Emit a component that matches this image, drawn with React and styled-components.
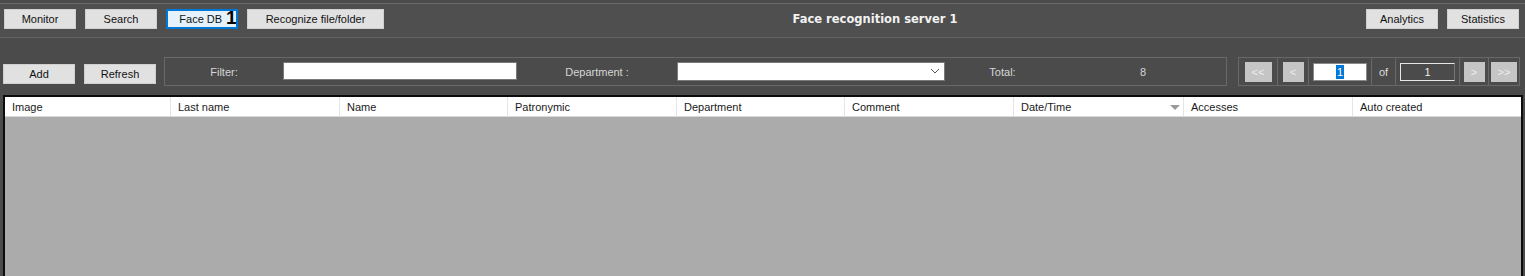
import React from 'react'
import styled, { createGlobalStyle } from 'styled-components'

const GlobalStyle = createGlobalStyle`
    html, body {
        margin: 0;
        padding: 0;
        background-color: #4b4b4b;
    }
    * { box-sizing: border-box; }
`

const Page = styled.div`
    width: 1525px;
    height: 276px;
    overflow: hidden;
    background-color: #4b4b4b;
    font-family: "Liberation Sans", Arial, sans-serif;
    font-size: 11px;
    padding-top: 3px;
`

const Toolbar = styled.div`
    display: flex;
    align-items: center;
    height: 35px;
    padding: 0 6px 3px 4px;
    background-color: #4f4f4f;
    border-top: 1px solid #6c6c6c;
    border-bottom: 1px solid #636363;
`

const ButtonGroup = styled.div`
    display: flex;
    gap: ${props => props.gap || 9}px;
`

const Button = styled.button`
    width: ${props => props.w || 72}px;
    height: 20px;
    padding: 0 0 0 ${props => props.focused ? 12 : 0}px;
    background-color: ${props => props.focused ? '#e5f1fb' : '#e1e1e1'};
    border: 1px solid ${props => props.focused ? '#0078d7' : '#d0d0d0'};
    box-shadow: ${props => props.focused ? 'inset 0 0 0 1px #0078d7' : 'none'};
    color: #111;
    font-family: "Liberation Sans", Arial, sans-serif;
    font-size: 11px;
    line-height: 18px;
    white-space: nowrap;
    cursor: pointer;
`

const Marker = styled.span`
    display: inline-block;
    margin-left: 4px;
    line-height: 0;
    vertical-align: -1px;
    font-family: "Liberation Sans", Arial, sans-serif;
    font-weight: 700;
    font-size: 19px;
    color: #000;
`

const Title = styled.div`
    flex: 1;
    text-align: center;
    color: #f2f2f2;
    font-family: "DejaVu Sans", Verdana, sans-serif;
    font-weight: 700;
    font-size: 11.5px;
`

const FilterRow = styled.div`
    display: flex;
    align-items: flex-start;
    margin-top: 19px;
    padding: 0 5px 0 3px;
    height: 38px;
`

const SideButtons = styled(ButtonGroup)`
    margin-top: 7px;
    margin-right: 8px;
`

const Panel = styled.div`
    display: flex;
    align-items: center;
    height: 29px;
    border: 1px solid #686868;
`

const FilterPanel = styled(Panel)`
    width: 1063px;
    margin-right: 11px;
`

const Label = styled.div`
    width: ${props => props.w}px;
    text-align: center;
    color: #d6d6d6;
    font-size: 11px;
`

const TextBox = styled.input`
    width: ${props => props.w}px;
    height: 18px;
    margin-top: -1px;
    border: 1px solid #7a7a7a;
    background-color: #fff;
    outline: 0;
    padding: 0 3px;
    font-family: "Liberation Sans", Arial, sans-serif;
    font-size: 11px;
`

const SelectBox = styled.div`
    display: flex;
    align-items: center;
    justify-content: flex-end;
    width: ${props => props.w}px;
    height: 19px;
    margin-top: -1px;
    background-color: #fff;
    border: 1px solid #7a7a7a;
    padding-right: 4px;
`

const Pager = styled(Panel)`
    width: 282px;
`

const PagerCell = styled.div`
    display: flex;
    align-items: center;
    justify-content: center;
    width: ${props => props.w}px;
    height: 100%;
    border-right: ${props => props.last ? 'none' : '1px solid #686868'};
    color: #dcdcdc;
    font-size: 11px;
`

const PagerButton = styled.div`
    display: flex;
    align-items: center;
    justify-content: center;
    width: ${props => props.w}px;
    height: 20px;
    background-color: #c5c5c5;
    color: #eeeeee;
    font-size: 11px;
`

const PageInput = styled.div`
    display: flex;
    align-items: center;
    justify-content: center;
    width: 54px;
    height: 18px;
    background-color: #fff;
    border: 1px solid #8a8a8a;
`

const Selected = styled.span`
    background-color: #0078d7;
    color: #fff;
    padding: 0 1px;
    line-height: 14px;
`

const PageCount = styled.div`
    display: flex;
    align-items: center;
    justify-content: center;
    width: 55px;
    height: 18px;
    border: 1px solid #e6e6e6;
    border-right-color: #777;
    color: #f0f0f0;
`

const Table = styled.div`
    margin: 0 2px 0 3px;
    border: 2px solid #0c0c0c;
    border-bottom: none;
    height: 200px;
    background-color: #ababab;
`

const HeaderRow = styled.div`
    display: flex;
    height: 20px;
    background-color: #fff;
    border-bottom: 1px solid #d8d8d8;
`

const HeaderCell = styled.div`
    position: relative;
    display: flex;
    align-items: center;
    width: ${props => props.w}px;
    padding-left: 7px;
    border-right: 1px solid #e5e5e5;
    color: #1a1a1a;
    font-size: 11px;
    &:last-child { border-right: none; flex: 1; }
`

const SortArrow = styled.span`
    position: absolute;
    right: 3px;
    top: 8px;
    width: 0;
    height: 0;
    border-left: 5px solid transparent;
    border-right: 5px solid transparent;
    border-top: 5px solid #9a9a9a;
`

const columns = [
    { title: 'Image', w: 166 },
    { title: 'Last name', w: 169 },
    { title: 'Name', w: 168 },
    { title: 'Patronymic', w: 169 },
    { title: 'Department', w: 168 },
    { title: 'Comment', w: 169 },
    { title: 'Date/Time', w: 170, sorted: true },
    { title: 'Accesses', w: 169 },
    { title: 'Auto created', w: 168 },
]

const App = () => {
    return (
        <Page>
            <GlobalStyle />
            <Toolbar>
                <ButtonGroup>
                    <Button>Monitor</Button>
                    <Button>Search</Button>
                    <Button focused>Face DB<Marker>1</Marker></Button>
                    <Button w={137}>Recognize file/folder</Button>
                </ButtonGroup>
                <Title>Face recognition server 1</Title>
                <ButtonGroup>
                    <Button>Analytics</Button>
                    <Button>Statistics</Button>
                </ButtonGroup>
            </Toolbar>

            <FilterRow>
                <SideButtons>
                    <Button>Add</Button>
                    <Button>Refresh</Button>
                </SideButtons>

                <FilterPanel>
                    <Label w={118}>Filter:</Label>
                    <TextBox w={234} />
                    <Label w={160}>Department :</Label>
                    <SelectBox w={268}>
                        <svg width="10" height="6" viewBox="0 0 10 6">
                            <path d="M1 1 L5 5 L9 1" fill="none" stroke="#555" strokeWidth="1" />
                        </svg>
                    </SelectBox>
                    <Label w={115}>Total:</Label>
                    <Label w={166}>8</Label>
                </FilterPanel>

                <Pager>
                    <PagerCell w={39}><PagerButton w={27}>&lt;&lt;</PagerButton></PagerCell>
                    <PagerCell w={31}><PagerButton w={21}>&lt;</PagerButton></PagerCell>
                    <PagerCell w={63}><PageInput><Selected>1</Selected></PageInput></PagerCell>
                    <PagerCell w={24}>of</PagerCell>
                    <PagerCell w={64}><PageCount>1</PageCount></PagerCell>
                    <PagerCell w={29}><PagerButton w={21}>&gt;</PagerButton></PagerCell>
                    <PagerCell w={30} last><PagerButton w={26}>&gt;&gt;</PagerButton></PagerCell>
                </Pager>
            </FilterRow>

            <Table>
                <HeaderRow>
                    {columns.map(col => (
                        <HeaderCell key={col.title} w={col.w}>
                            {col.title}
                            {col.sorted && <SortArrow />}
                        </HeaderCell>
                    ))}
                </HeaderRow>
            </Table>
        </Page>
    )
}

export default App
